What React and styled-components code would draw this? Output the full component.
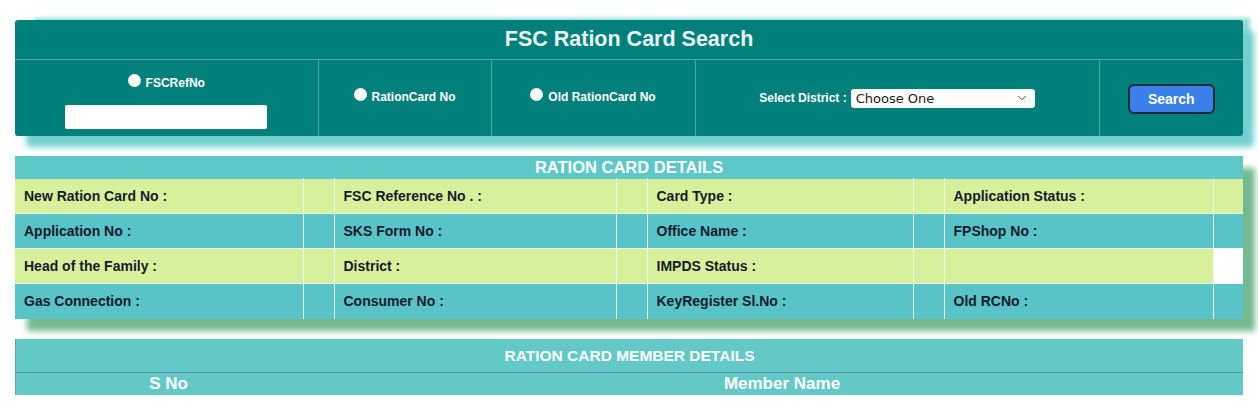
import React from "react";
import styled, { createGlobalStyle } from "styled-components";
import { ChevronDown } from "lucide-react";

const GlobalStyle = createGlobalStyle`
  body {
    margin: 0;
    background: #ffffff;
    font-family: "Liberation Sans", Arial, sans-serif;
  }
`;

const Page = styled.div`
  display: flex;
  flex-direction: column;
  gap: 20px;
  width: 1228px;
  padding: 20px 15px 0;
`;

const SearchPanel = styled.div`
  background: #017f7b;
  border-radius: 3px;
  box-shadow: 11px 11px 6px #72d0cf, 13px -8px 4px -6px #8fdcda;
`;

const Table = styled.table`
  width: 100%;
  border-collapse: collapse;
  table-layout: fixed;
`;

const TitleCell = styled.th`
  height: 39px;
  padding: 0;
  border-bottom: 1px solid #4ea9a6;
  color: #e8f6f5;
  font-size: 21.5px;
  font-weight: bold;
  text-align: center;
`;

const SearchCell = styled.td`
  height: 76px;
  padding: 0;
  text-align: center;
  vertical-align: middle;
  color: #ffffff;
  font-size: 12px;
  font-weight: bold;
  & + & {
    border-left: 1px solid #4ea9a6;
  }
`;

const Stack = styled.div`
  display: flex;
  flex-direction: column;
  align-items: center;
  gap: 13px;
  padding-top: 6px;
`;

const RadioLabel = styled.label`
  display: inline-flex;
  align-items: center;
  gap: 5px;
  margin-top: ${(p) => p.$nudge || 0}px;
`;

const Radio = styled.input.attrs({ type: "radio" })`
  appearance: none;
  width: 13px;
  height: 13px;
  margin: 0 0 5px;
  border-radius: 50%;
  background: #ffffff;
`;

const TextInput = styled.input`
  width: 202px;
  height: 24px;
  box-sizing: border-box;
  border: none;
  border-radius: 2px;
  background: #ffffff;
`;

const DistrictRow = styled.div`
  display: flex;
  align-items: center;
  justify-content: center;
  gap: 4px;
`;

const SelectBox = styled.div`
  display: flex;
  align-items: center;
  justify-content: space-between;
  width: 184px;
  height: 19px;
  box-sizing: border-box;
  padding: 0 6px 0 5px;
  background: #ffffff;
  border-radius: 3px;
  color: #222222;
  font-family: "DejaVu Sans", Verdana, sans-serif;
  font-size: 13px;
  font-weight: normal;
`;

const SearchButton = styled.button`
  width: 87px;
  height: 30px;
  margin-top: 2px;
  border: 2px solid #1d2a38;
  border-radius: 6px;
  background: #3a80e8;
  color: #ffffff;
  font-family: "Liberation Sans", Arial, sans-serif;
  font-size: 14px;
  font-weight: bold;
`;

const DetailsPanel = styled.div`
  box-shadow: 12px 12px 6px #74b98f;
`;

const DetailsHeader = styled.th`
  height: 22px;
  padding: 0;
  background: #5ec7c7;
  color: #ffffff;
  font-size: 16.5px;
  font-weight: bold;
  text-align: center;
`;

const DetailsRow = styled.tr`
  background: ${(p) => (p.$light ? "#d6f09b" : "#59c4c7")};
`;

const DetailsCell = styled.td`
  height: 34px;
  padding: 0 0 0 9px;
  border: 1px solid #eef8ea;
  border-top-color: ${(p) => (p.$first ? "transparent" : "#eef8ea")};
  border-bottom-color: ${(p) => (p.$last ? "transparent" : "#eef8ea")};
  background: ${(p) => (p.$blank ? "#ffffff" : "transparent")};
  color: #171a2c;
  font-size: 14px;
  font-weight: bold;
  white-space: nowrap;
  &:first-child {
    border-left: none;
  }
  &:last-child {
    border-right: none;
  }
`;

const MemberPanel = styled.div`
  background: #62c9c7;
  border-left: 1px solid #5f9fae;
`;

const MemberHeader = styled.th`
  height: 33px;
  padding: 0;
  border-bottom: 1px solid #5e8fa2;
  color: #ffffff;
  font-size: 15.5px;
  font-weight: bold;
  text-align: center;
`;

const MemberColumn = styled.th`
  height: 22px;
  padding: 0;
  color: #ffffff;
  font-size: 17px;
  font-weight: bold;
  text-align: center;
`;

const detailWidths = [288, 31, 282, 31, 266, 31, 269, 30];

const detailRows = [
  ["New Ration Card No :", "FSC Reference No . :", "Card Type :", "Application Status :"],
  ["Application No :", "SKS Form No :", "Office Name :", "FPShop No :"],
  ["Head of the Family :", "District :", "IMPDS Status :", ""],
  ["Gas Connection :", "Consumer No :", "KeyRegister Sl.No :", "Old RCNo :"],
];

const App = () => {
  return (
    <>
      <GlobalStyle />
      <Page>
        <SearchPanel>
          <Table>
            <colgroup>
              <col style={{ width: 303 }} />
              <col style={{ width: 173 }} />
              <col style={{ width: 204 }} />
              <col style={{ width: 404 }} />
              <col style={{ width: 144 }} />
            </colgroup>
            <thead>
              <tr>
                <TitleCell colSpan={5}>FSC Ration Card Search</TitleCell>
              </tr>
            </thead>
            <tbody>
              <tr>
                <SearchCell>
                  <Stack>
                    <RadioLabel>
                      <Radio name="searchBy" />
                      FSCRefNo
                    </RadioLabel>
                    <TextInput />
                  </Stack>
                </SearchCell>
                <SearchCell>
                  <RadioLabel $nudge={-6}>
                    <Radio name="searchBy" />
                    RationCard No
                  </RadioLabel>
                </SearchCell>
                <SearchCell>
                  <RadioLabel $nudge={-6}>
                    <Radio name="searchBy" />
                    Old RationCard No
                  </RadioLabel>
                </SearchCell>
                <SearchCell>
                  <DistrictRow>
                    Select District :
                    <SelectBox>
                      <span>Choose One</span>
                      <ChevronDown size={14} strokeWidth={1.5} color="#333" />
                    </SelectBox>
                  </DistrictRow>
                </SearchCell>
                <SearchCell>
                  <SearchButton>Search</SearchButton>
                </SearchCell>
              </tr>
            </tbody>
          </Table>
        </SearchPanel>

        <DetailsPanel>
          <Table>
            <colgroup>
              {detailWidths.map((w, i) => (
                <col key={i} style={{ width: w }} />
              ))}
            </colgroup>
            <thead>
              <tr>
                <DetailsHeader colSpan={8}>RATION CARD DETAILS</DetailsHeader>
              </tr>
            </thead>
            <tbody>
              {detailRows.map((row, r) => (
                <DetailsRow key={r} $light={r % 2 === 0}>
                  {row.map((label, c) => (
                    <React.Fragment key={c}>
                      <DetailsCell $first={r === 0} $last={r === detailRows.length - 1}>
                        {label}
                      </DetailsCell>
                      <DetailsCell
                        $first={r === 0}
                        $last={r === detailRows.length - 1}
                        $blank={r === 2 && c === 3}
                      />
                    </React.Fragment>
                  ))}
                </DetailsRow>
              ))}
            </tbody>
          </Table>
        </DetailsPanel>

        <MemberPanel>
          <Table>
            <colgroup>
              <col style={{ width: 305 }} />
              <col />
            </colgroup>
            <thead>
              <tr>
                <MemberHeader colSpan={2}>RATION CARD MEMBER DETAILS</MemberHeader>
              </tr>
              <tr>
                <MemberColumn>S No</MemberColumn>
                <MemberColumn>Member Name</MemberColumn>
              </tr>
            </thead>
          </Table>
        </MemberPanel>
      </Page>
    </>
  );
};

export default App;
